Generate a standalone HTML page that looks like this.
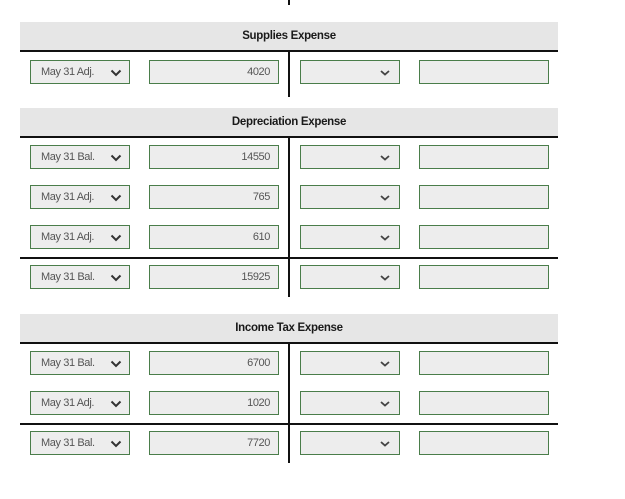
<!DOCTYPE html>
<html><head><style>
body{margin:0;width:625px;height:499px;background:#fff;position:relative;overflow:hidden;font-family:"Liberation Sans",sans-serif;}
.hd{position:absolute;left:20px;width:538px;height:28px;background:#e6e6e6;border-bottom:2px solid #111;font-weight:bold;font-size:11.5px;color:#1a1a1a;text-align:center;line-height:28px;letter-spacing:-0.3px;}
.ln{position:absolute;left:20px;width:538px;height:1.5px;background:#111;}
.vl{position:absolute;left:288px;width:2px;background:#111;}
.b{position:absolute;height:22px;background:#ededed;border:1px solid #4a7d4a;box-sizing:content-box;font-size:11px;color:#555;line-height:23px;letter-spacing:-0.4px;}
.s{width:98px;}
.s span{position:absolute;left:10px;}
.am{width:128px;text-align:right;}
.am span{position:absolute;right:8px;}
.rs{width:98px;}
.ri{width:128px;}
svg{position:absolute;}
</style></head><body>
<div class="vl" style="top:0;height:5px"></div>

<div class="hd" style="top:22px">Supplies Expense</div>
<div class="vl" style="top:52px;height:45px"></div>

<div class="hd" style="top:108px">Depreciation Expense</div>
<div class="ln" style="top:257px"></div>
<div class="vl" style="top:138px;height:159px"></div>

<div class="hd" style="top:314px">Income Tax Expense</div>
<div class="ln" style="top:423px"></div>
<div class="vl" style="top:344px;height:119px"></div>

<div id="rows"></div>
<script>
var rows=[[60,"May 31 Adj.","4020"],[145,"May 31 Bal.","14550"],[185,"May 31 Adj.","765"],[225,"May 31 Adj.","610"],[265,"May 31 Bal.","15925"],[351,"May 31 Bal.","6700"],[391,"May 31 Adj.","1020"],[431,"May 31 Bal.","7720"]];
var h="";
rows.forEach(function(r){var y=r[0];
h+='<div class="b s" style="left:30px;top:'+y+'px"><span>'+r[1]+'</span><svg width="12" height="8" style="left:79px;top:8px"><path d="M1.5 1.5 L6 6 L10.5 1.5" stroke="#333" stroke-width="2" fill="none"/></svg></div>';
h+='<div class="b am" style="left:149px;top:'+y+'px"><span>'+r[2]+'</span></div>';
h+='<div class="b rs" style="left:300px;top:'+y+'px"><svg width="12" height="8" style="left:78px;top:8px"><path d="M2 2 L6 5.5 L10 2" stroke="#444" stroke-width="1.8" fill="none"/></svg></div>';
h+='<div class="b ri" style="left:419px;top:'+y+'px"></div>';
});
document.getElementById("rows").innerHTML=h;
</script>
</body></html>
